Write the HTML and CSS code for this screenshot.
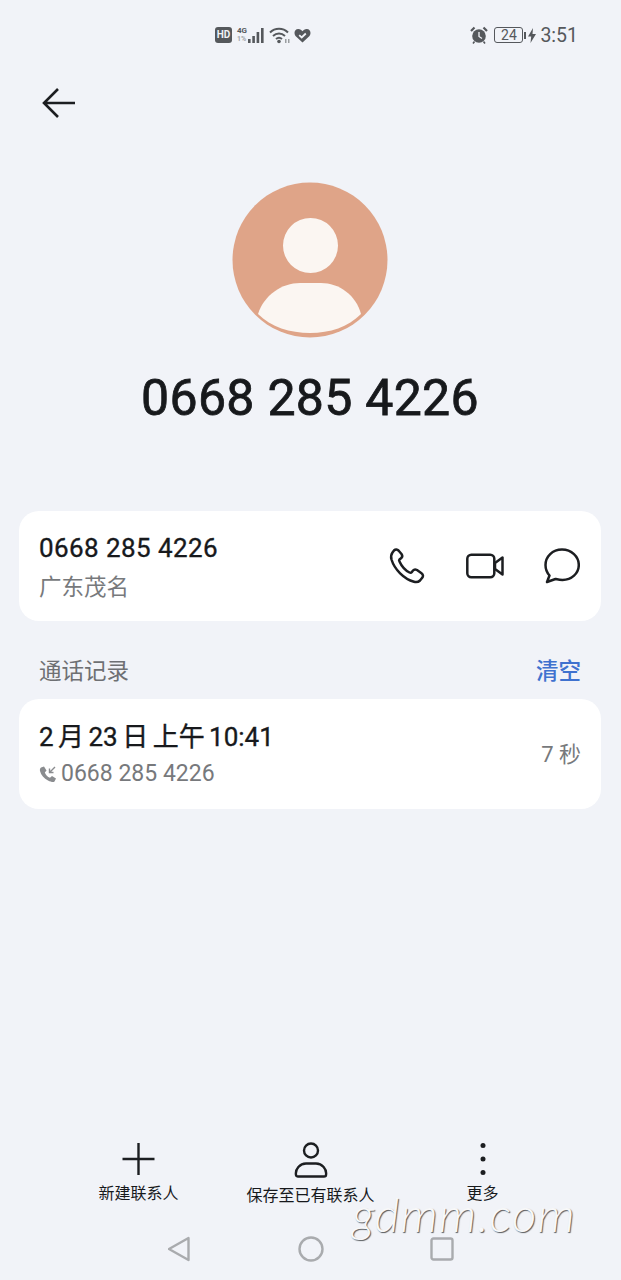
FILE: index.html
```html
<!DOCTYPE html>
<html lang="zh-CN">
<head>
    <meta charset="UTF-8">
    <meta name="viewport" content="width=device-width, initial-scale=1.0">
    <title>通话详情</title>
    <link rel="stylesheet" href="styles.css">
</head>
<body>
    <div class="page">
        <div class="status-bar">
            <div class="status-center">
                <span class="hd">HD</span>
                <span class="net"><span>4G</span><span class="net-sub">1%</span></span>
                <svg class="signal" width="20" height="18" viewBox="0 0 20 18"><g fill="#55585c"><rect x="0" y="13" width="2.6" height="4"/><rect x="4.3" y="10" width="2.6" height="7"/><rect x="8.6" y="6" width="2.6" height="11"/><rect x="13" y="2" width="2.6" height="15"/></g></svg>
                <svg class="wifi" width="24" height="18" viewBox="0 0 24 18"><g fill="none" stroke="#55585c" stroke-width="2"><path d="M1 6.500C6 1.500 14 1.500 19 6.500"/><path d="M4 10C7.500 6.800 12.500 6.800 16 10"/><path d="M7 13C8.800 11.500 11.200 11.500 13 13"/></g><circle cx="10" cy="15.500" r="1.800" fill="#55585c"/><rect x="16" y="13" width="1.500" height="4" fill="#9a9da0"/><rect x="19" y="13" width="1.500" height="4" fill="#9a9da0"/></svg>
                <svg class="heart" width="17" height="15" viewBox="0 0 17 15"><path d="M8.500 14.500L1.500 8C-.5 5.500.5 1 4.300 1C6.200 1 7.700 2 8.500 3.300C9.300 2 10.800 1 12.700 1C16.500 1 17.500 5.500 15.500 8Z" fill="#55585c"/><path d="M5.200 7.200L7.700 9.500L11.800 5.500" fill="none" stroke="#f1f3f8" stroke-width="1.800"/></svg>
            </div>
            <div class="status-right">
                <svg class="alarm" width="18" height="18" viewBox="0 0 18 18"><circle cx="9" cy="10" r="6.800" fill="#55585c"/><path d="M9 6V10.500L12 12.500" fill="none" stroke="#f1f3f8" stroke-width="1.300"/><path d="M1 5L4.500 1.500M17 5L13.500 1.500" stroke="#55585c" stroke-width="2.200"/><path d="M4.500 15.500L3 17.500M13.500 15.500L15 17.500" stroke="#55585c" stroke-width="1.600"/></svg>
                <span class="battery">24</span>
                <span class="battery-cap"></span>
                <svg class="bolt" width="8" height="15" viewBox="0 0 8 15"><path d="M5 0L0 8.500H3.200L2.500 15L8 6H4.500Z" fill="#55585c"/></svg>
                <span class="clock">3:51</span>
            </div>
        </div>

        <div class="top-bar">
            <svg width="34" height="32" viewBox="0 0 34 32"><path d="M33 16H2M16 2L2 16L16 30" fill="none" stroke="#1c1e21" stroke-width="2.600"/></svg>
        </div>

        <div class="avatar">
            <svg width="156" height="156" viewBox="0 0 156 156">
                <circle cx="78" cy="78" r="77.500" fill="#dfa488"/>
                <circle cx="78.500" cy="63.500" r="27.500" fill="#fbf6f2"/>
                <path d="M26 132C32 113 50 101 68 101H89C107 101 124 113 129 132C116 145 98 151 78 151C58 151 39 145 26 132Z" fill="#fbf6f2"/>
            </svg>
        </div>
        <h1 class="name">0668 285 4226</h1>

        <div class="card number-card">
            <div class="card-text number-text">
                <div class="number">0668 285 4226</div>
                <div class="place">广东茂名</div>
            </div>
            <div class="card-actions">
                <svg width="38" height="38" viewBox="0 0 38 38"><path d="M6 3.500C7.500 2 9.500 2.500 10.500 3.500L13.500 7C14.500 8.500 14.500 10 13.300 11L11.500 12.500C11 13 11 13.800 11.500 14.500C13.500 19 17.500 23.500 21.500 25.500C22.500 26 23.200 25.800 23.700 25.200L25 23.500C26 22.300 27.500 22.200 29 23L33.500 26.200C35.300 27.500 35.500 29.500 34 31L32 33.500C30.500 35 28.500 35.500 26 34.800C16 32 6.500 22.500 3.500 12.500C2.700 9.500 3 7.500 4.500 5.500Z" fill="none" stroke="#1c1e21" stroke-width="2.500" stroke-linejoin="round"/></svg>
                <svg width="38" height="26" viewBox="0 0 38 26"><rect x="1.300" y="1.800" width="27" height="22.400" rx="4" fill="none" stroke="#1c1e21" stroke-width="2.500"/><path d="M29 10L36.500 4.500V21.500L29 16Z" fill="none" stroke="#1c1e21" stroke-width="2.500" stroke-linejoin="round"/></svg>
                <svg width="36" height="36" viewBox="0 0 36 36"><path d="M18 1.500C27.500 1.500 34.800 8.500 34.800 17C34.800 25.500 27.500 32 18.500 32C16 32 13.800 31.500 11.500 31L3 34L5.500 27.500C2.800 24.500 1.500 21 1.500 17C1.500 8.500 8.500 1.500 18 1.500Z" fill="none" stroke="#1c1e21" stroke-width="2.500" stroke-linejoin="round"/></svg>
            </div>
        </div>

        <div class="section-head">
            <span class="section-title">通话记录</span>
            <span class="section-clear">清空</span>
        </div>

        <div class="card log-card">
            <div class="card-text log-text">
                <div class="log-time">2 月 23 日 上午 10:41</div>
                <div class="log-number">
                    <svg width="18" height="18" viewBox="0 0 18 18"><path d="M2 2.500L5 1.500L7.500 5.500L5.800 7.500C6.800 10 8.500 11.800 11 12.800L13 11L17 13.500L15.500 16.500C14.500 17.500 12 17 9 15.500C5 13.500 2 10 1 6C.7 4.500 1 3.300 2 2.500Z" fill="#8a8c8f"/><path d="M16 2L10.500 7.500M10.500 3.500V7.500H14.500" fill="none" stroke="#8a8c8f" stroke-width="1.400"/></svg>
                    <span>0668 285 4226</span>
                </div>
            </div>
            <div class="log-length">7 秒</div>
        </div>

        <div class="spacer"></div>

        <div class="bottom-actions">
            <div class="bottom-action">
                <svg width="34" height="34" viewBox="0 0 34 34"><path d="M16.500 1V33M.5 17H32.500" stroke="#1c1e21" stroke-width="2.400"/></svg>
                <span>新建联系人</span>
            </div>
            <div class="bottom-action">
                <svg width="34" height="36" viewBox="0 0 34 36"><circle cx="17" cy="8.500" r="7" fill="none" stroke="#1c1e21" stroke-width="2.400"/><path d="M2 33C1 27 6 21.500 12 21.500H22C28 21.500 33 27 32 33C32 34 31 34.500 30 34.500H4C3 34.500 2 34 2 33Z" fill="none" stroke="#1c1e21" stroke-width="2.400"/></svg>
                <span>保存至已有联系人</span>
            </div>
            <div class="bottom-action">
                <svg width="34" height="34" viewBox="0 0 34 34"><g fill="#1c1e21"><circle cx="17" cy="3.500" r="2.500"/><circle cx="17" cy="17" r="2.500"/><circle cx="17" cy="30.500" r="2.500"/></g></svg>
                <span>更多</span>
            </div>
        </div>

        <div class="nav-bar">
            <svg width="24" height="26" viewBox="0 0 24 26"><path d="M20.500 2V24L1 13Z" fill="none" stroke="#a9abae" stroke-width="2.400" stroke-linejoin="round"/></svg>
            <svg width="26" height="26" viewBox="0 0 26 26"><circle cx="13" cy="13" r="11.500" fill="none" stroke="#a9abae" stroke-width="2.400"/></svg>
            <svg width="24" height="24" viewBox="0 0 24 24"><rect x="1.500" y="1.500" width="21" height="21" rx="2" fill="none" stroke="#a9abae" stroke-width="2.400"/></svg>
        </div>

        <div class="watermark">gdmm.com</div>
    </div>
</body>
</html>
```

FILE: styles.css
```css
* {
    box-sizing: border-box;
}

body {
    margin: 0;
    background: #f1f3f8;
    color: #17191c;
    font-family: Roboto, "Noto Sans CJK SC", sans-serif;
}

.page {
    position: relative;
    display: flex;
    flex-direction: column;
    height: 1280px;
    overflow: hidden;
}

.status-bar {
    display: flex;
    align-items: center;
    height: 70px;
    padding-left: 215px;
    padding-right: 43px;
    justify-content: space-between;
    color: #55585c;
}

.status-center,
.status-right {
    display: flex;
    align-items: center;
}

.hd {
    width: 17px;
    height: 16px;
    border-radius: 3px;
    background: #55585c;
    color: #f1f3f8;
    font-size: 10px;
    font-weight: 700;
    line-height: 16px;
    text-align: center;
}

.net {
    display: flex;
    flex-direction: column;
    margin-left: 5px;
    font-size: 8px;
    font-weight: 700;
    line-height: 9px;
}

.net-sub {
    color: #a3a5a8;
    font-size: 7px;
}

.signal {
    margin-left: 1px;
}

.wifi {
    margin-left: 1px;
}

.heart {
    margin-left: 1px;
}

.alarm {
    margin-right: 6px;
}

.battery {
    width: 29px;
    height: 16px;
    border: 1.500px solid #55585c;
    border-radius: 3px;
    font-size: 14px;
    line-height: 14px;
    text-align: center;
}

.battery-cap {
    width: 2px;
    height: 7px;
    margin-left: 1px;
    background: #55585c;
}

.bolt {
    margin-left: 2px;
}

.clock {
    margin-left: 4px;
    padding-top: 1px;
    font-size: 19.500px;
}

.top-bar {
    display: flex;
    height: 112px;
    padding: 17px 0 0 42px;
}

.avatar {
    display: flex;
    justify-content: center;
    height: 156px;
    padding-right: 1px;
}

.name {
    margin: 31px 0 0;
    padding-right: 1px;
    font-size: 50px;
    font-weight: 400;
    letter-spacing: .3px;
    line-height: 58px;
    text-align: center;
    -webkit-text-stroke: .8px #17191c;
}

.card {
    display: flex;
    align-items: center;
    justify-content: space-between;
    height: 110px;
    margin: 0 20px 0 19px;
    padding: 0 21px 0 20px;
    border-radius: 20px;
    background: #ffffff;
}

.number-card {
    margin-top: 84px;
}

.number-text,
.log-text {
    padding-top: 2px;
}

.number {
    font-size: 26px;
    font-weight: 400;
    letter-spacing: .42px;
    line-height: 34px;
    -webkit-text-stroke: .35px #17191c;
}

.place {
    margin-top: 7px;
    color: #77797c;
    font-size: 22.500px;
    line-height: 31px;
}

.card-actions {
    display: flex;
    align-items: center;
    gap: 40px;
}

.section-head {
    display: flex;
    align-items: center;
    justify-content: space-between;
    height: 78px;
    padding: 17px 40px 0 39px;
}

.section-title {
    color: #6e7073;
    font-size: 22.500px;
}

.section-clear {
    color: #3f72cf;
    font-size: 22.500px;
    font-weight: 500;
}

.log-time {
    font-size: 26px;
    font-weight: 400;
    word-spacing: -2px;
    line-height: 34px;
    -webkit-text-stroke: .35px #17191c;
}

.log-number {
    display: flex;
    align-items: center;
    gap: 4px;
    margin-top: 4px;
    color: #77797c;
    font-size: 23px;
    line-height: 32px;
}

.log-length {
    margin-right: -1px;
    margin-bottom: 4px;
    color: #77797c;
    font-size: 22px;
}

.spacer {
    flex: 1;
}

.bottom-actions {
    display: grid;
    grid-template-columns: 172px 172px 172px;
    justify-content: center;
}

.bottom-action {
    display: flex;
    flex-direction: column;
    align-items: center;
    gap: 9px;
    font-size: 16px;
    line-height: 18px;
}

.bottom-action span {
    white-space: nowrap;
}

.nav-bar {
    display: flex;
    align-items: center;
    justify-content: center;
    gap: 106px;
    height: 62px;
    margin-top: 13px;
}

.watermark {
    position: absolute;
    left: 352px;
    top: 1204px;
    color: #f8f8f9;
    font-family: Lato, sans-serif;
    font-size: 48px;
    font-style: italic;
    font-weight: 300;
    letter-spacing: 1px;
    line-height: 20px;
    text-shadow: 1px 1px 1px #55585c;
}
```
